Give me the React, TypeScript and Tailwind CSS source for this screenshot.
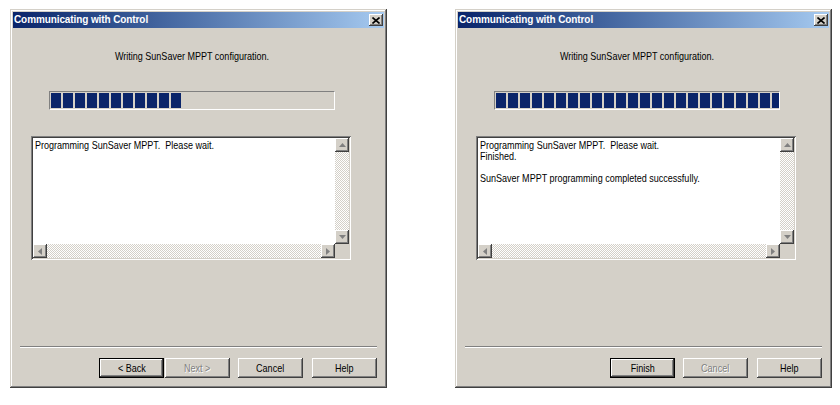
import React from "react";
import clsx from "clsx";

const body = "font-['Liberation_Sans',Arial,sans-serif]";

const raised =
  "shadow-[inset_-1px_-1px_#404040,inset_1px_1px_#ffffff,inset_-2px_-2px_#808080,inset_2px_2px_#d4d0c8]";

// MS Sans Serif is much narrower than Arial, squeeze the text a bit
const narrow = "inline-block scale-x-[0.82] whitespace-pre";

function Arrow({ dir }: { dir: "up" | "down" | "left" | "right" }) {
  const pts: Record<string, string> = {
    up: "3.5,0 7,4 0,4",
    down: "0,0 7,0 3.5,4",
    left: "4,0 4,7 0,3.5",
    right: "0,0 4,3.5 0,7",
  };
  const vertical = dir === "up" || dir === "down";
  return (
    <div className={clsx("w-[14px] h-[14px] shrink-0 bg-[#d4d0c8] flex items-center justify-center", raised)}>
      <svg width={vertical ? 7 : 4} height={vertical ? 4 : 7} viewBox={vertical ? "0 0 7 4" : "0 0 4 7"}>
        <polygon points={pts[dir]} fill="#808080" />
      </svg>
    </div>
  );
}

const track =
  "bg-[image:repeating-conic-gradient(#d4d0c8_0%_25%,#ffffff_0%_50%)] bg-[length:2px_2px]";

function Button({ label, isDefault, disabled }: { label: string; isDefault?: boolean; disabled?: boolean }) {
  return (
    <div
      className={clsx(
        "w-[65px] h-[20px] flex items-center justify-center text-[11px] bg-[#d4d0c8]",
        isDefault
          ? "border border-black shadow-[inset_-1px_-1px_#404040,inset_1px_1px_#ffffff,inset_-2px_-2px_#808080]"
          : raised,
        disabled ? "text-[#808080] [text-shadow:1px_1px_0_#ffffff]" : "text-black"
      )}
    >
      <span className={narrow}>{label}</span>
    </div>
  );
}

function Dialog({
  blocks,
  lines,
  buttons,
}: {
  blocks: number;
  lines: string[];
  buttons: React.ReactNode;
}) {
  return (
    <div className="w-[377px] h-[379px] shrink-0 bg-[#d4d0c8] p-[3px] flex flex-col shadow-[inset_-1px_-1px_#404040,inset_1px_1px_#d4d0c8,inset_-2px_-2px_#808080,inset_2px_2px_#ffffff]">
      <div className="h-[16px] flex items-center justify-between bg-linear-to-r from-[#0a246a] to-[#a6caf0] pl-[1px]">
        <span className="font-bold text-[10px] leading-[16px] text-white tracking-[-0.1px]">
          Communicating with Control
        </span>
        <div className={clsx("w-[14px] h-[12px] mr-[1px] bg-[#d4d0c8] flex items-center justify-center", raised)}>
          <svg width="8" height="7" viewBox="0 0 8 7">
            <path d="M0.5 0.5 L7.5 6.5 M7.5 0.5 L0.5 6.5" stroke="black" strokeWidth="1.6" />
          </svg>
        </div>
      </div>

      <div className="mt-[22px] h-[13px] leading-[13px] text-[11px] text-center pr-[14px] text-black">
        <span className={narrow}>Writing SunSaver MPPT configuration.</span>
      </div>

      <div className="mt-[28px] ml-[36px] w-[286px] h-[19px] border border-t-[#808080] border-l-[#808080] border-b-white border-r-white p-[1px] flex gap-[2px] overflow-hidden">
        {Array.from({ length: blocks }).map((_, i) => (
          <div key={i} className="w-[10px] shrink-0 h-full bg-[#0a246a]" />
        ))}
      </div>

      <div className="mt-[26px] ml-[18px] w-[320px] h-[124px] bg-white p-[2px] flex flex-col shadow-[inset_1px_1px_#808080,inset_-1px_-1px_#ffffff,inset_2px_2px_#404040,inset_-2px_-2px_#d4d0c8]">
        <div className="flex flex-1 min-h-0">
          <div className="flex-1 pl-[2px] pt-[2px] text-[11px] leading-[11px] text-black">
            {lines.map((l, i) => (
              <div key={i} className="h-[11px]">
                <span className={clsx(narrow, "origin-left")}>{l}</span>
              </div>
            ))}
          </div>
          <div className={clsx("w-[14px] flex flex-col justify-between", track)}>
            <Arrow dir="up" />
            <Arrow dir="down" />
          </div>
        </div>
        <div className="flex h-[14px]">
          <div className={clsx("flex-1 flex justify-between", track)}>
            <Arrow dir="left" />
            <Arrow dir="right" />
          </div>
          <div className="w-[14px] bg-[#d4d0c8]" />
        </div>
      </div>

      <div className="mt-[86px] mx-[7px] h-[2px] border-t border-t-[#808080] border-b border-b-white" />

      <div className="mt-[10px] flex justify-end pr-[7px]">{buttons}</div>
    </div>
  );
}

export default function App() {
  return (
    <div className={clsx("w-[840px] h-[405px] bg-white flex gap-[68px] pt-[9px] pl-[10px]", body)}>
      <Dialog
        blocks={11}
        lines={["Programming SunSaver MPPT.  Please wait."]}
        buttons={
          <>
            <Button label="< Back" isDefault />
            <div className="ml-[1px]">
              <Button label="Next >" disabled />
            </div>
            <div className="ml-[8px]">
              <Button label="Cancel" />
            </div>
            <div className="ml-[9px]">
              <Button label="Help" />
            </div>
          </>
        }
      />
      <Dialog
        blocks={24}
        lines={[
          "Programming SunSaver MPPT.  Please wait.",
          "Finished.",
          "",
          "SunSaver MPPT programming completed successfully.",
        ]}
        buttons={
          <>
            <Button label="Finish" isDefault />
            <div className="ml-[8px]">
              <Button label="Cancel" disabled />
            </div>
            <div className="ml-[9px]">
              <Button label="Help" />
            </div>
          </>
        }
      />
    </div>
  );
}
